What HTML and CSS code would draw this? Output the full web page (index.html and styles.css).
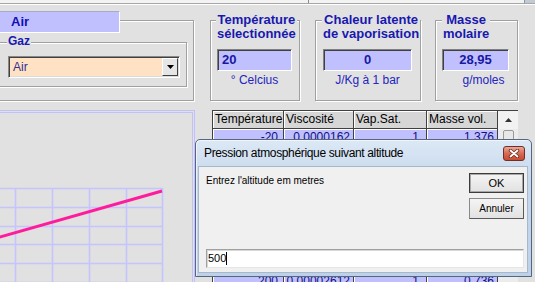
FILE: index.html
```html
<!DOCTYPE html>
<html lang="fr">
<head>
<meta charset="utf-8">
<title>Pression atmosphérique</title>
<link rel="stylesheet" href="styles.css">
</head>
<body>
<div class="topbar"><span class="tick"></span><span class="topbar-end"></span></div>
<div class="main">
  <div class="left-top">
    <div class="group outer">
      <div class="airbox">Air</div>
      <div class="group gaz">
        <div class="legend gazlegend">Gaz</div>
        <div class="combo">
          <span class="combo-text">Air</span>
          <span class="combo-btn"><svg width="7" height="4" viewBox="0 0 7 4"><path d="M0 0H7L3.5 4Z" fill="#000"/></svg></span>
        </div>
      </div>
    </div>
  </div>
  <div class="right-top">
    <div class="group box temp">
      <div class="legend">Température<br>sélectionnée</div>
      <div class="valbox left">20</div>
      <div class="unit">° Celcius</div>
    </div>
    <div class="group box chal">
      <div class="legend">Chaleur latente<br>de vaporisation</div>
      <div class="valbox">0</div>
      <div class="unit">J/Kg à 1 bar</div>
    </div>
    <div class="group box masse">
      <div class="legend">Masse<br>molaire</div>
      <div class="valbox">28,95</div>
      <div class="unit shift">g/moles</div>
    </div>
  </div>
  <div class="chart">
    <svg class="plot" width="199" height="174" viewBox="-7 113 199 174">
      <g stroke="#c4c4ff" stroke-width="1.6" fill="none">
        <path d="M15.5 188V290M52.5 188V290M89.5 188V290M126.5 188V290M162.5 188V290"/>
        <path d="M-7 188.5H163M-7 207.5H163M-7 226.5H163M-7 244.5H163M-7 263.5H163M-7 282.5H163"/>
      </g>
      <path d="M-7 239L162 191" stroke="#ff1c9c" stroke-width="3" fill="none"/>
    </svg>
  </div>
  <div class="table-wrap">
    <div class="cells">
      <div class="hcell">Température</div><div class="hcell">Viscosité</div><div class="hcell">Vap.Sat.</div><div class="hcell">Masse vol.</div>
      <div class="dcell p5">-20</div><div class="dcell">0,0000162</div><div class="dcell p7">1</div><div class="dcell">1,376</div>
      <div class="dcell p5">0</div><div class="dcell">0,0000172</div><div class="dcell p7">1</div><div class="dcell">1,293</div>
      <div class="dcell p5">20</div><div class="dcell">0,0000181</div><div class="dcell p7">1</div><div class="dcell">1,205</div>
      <div class="dcell p5">40</div><div class="dcell">0,0000191</div><div class="dcell p7">1</div><div class="dcell">1,128</div>
      <div class="dcell p5">60</div><div class="dcell">0,0000200</div><div class="dcell p7">1</div><div class="dcell">1,060</div>
      <div class="dcell p5">80</div><div class="dcell">0,0000209</div><div class="dcell p7">1</div><div class="dcell">1,000</div>
      <div class="dcell p5">100</div><div class="dcell">0,0000218</div><div class="dcell p7">1</div><div class="dcell">0,946</div>
      <div class="dcell p5">150</div><div class="dcell">0,0000240</div><div class="dcell p7">1</div><div class="dcell">0,835</div>
      <div class="dcell p5">200</div><div class="dcell">0,00002612</div><div class="dcell p7">1</div><div class="dcell">0,736</div>
    </div>
    <div class="scroll">
      <div class="sb-up"><svg width="7" height="4" viewBox="0 0 7 4"><path d="M0 4H7L3.5 0Z" fill="#333"/></svg></div>
      <div class="sb-thumb"></div>
    </div>
  </div>
</div>

<div class="dialog">
  <div class="dtitle">
    <span class="dtitle-text">Pression atmosphérique suivant altitude</span>
    <span class="dclose"><svg width="12" height="9" viewBox="0 0 12 9"><path d="M2.5 1.5L9.5 7.5M9.5 1.5L2.5 7.5" stroke="#6a2a1c" stroke-width="3.4" stroke-linecap="round"/><path d="M2.5 1.5L9.5 7.5M9.5 1.5L2.5 7.5" stroke="#fff" stroke-width="1.8" stroke-linecap="round"/></svg></span>
  </div>
  <div class="dclient">
    <div class="dtop">
      <div class="dlabel">Entrez l'altitude em metres</div>
      <div class="dbuttons">
        <div class="btn default">OK</div>
        <div class="btn">Annuler</div>
      </div>
    </div>
    <div class="dinput">500<span class="caret"></span></div>
  </div>
</div>
</body>
</html>
```

FILE: styles.css
```css
body {
  margin: 0;
  width: 535px;
  height: 282px;
  overflow: hidden;
  position: relative;
  background: #e1e1e1;
  font-family: "Liberation Sans", Arial, sans-serif;
}

.topbar {
  height: 3px;
  background: #f3f3f3;
  border-bottom: 1px solid #a6a6a6;
  box-shadow: 0 1px 0 #fff;
  display: flex;
}
.tick {
  width: 1px;
  margin-left: 308px;
  background: #8a8a8a;
}
.topbar-end {
  margin-left: auto;
  width: 10px;
  background: #c2cad4;
  border-left: 1px solid #8a96a4;
}

.main {
  display: grid;
  grid-template-columns: 195px 340px;
  grid-template-rows: 106px 172px;
  height: 278px;
  overflow: hidden;
}

.group {
  box-sizing: border-box;
  border: 1px solid #a0a0a0;
  box-shadow: 1px 1px 0 #fff, inset 1px 1px 0 #fff;
}

.outer {
  margin-top: 16px;
  margin-left: -10px;
  width: 204px;
  height: 81px;
}
.airbox {
  margin-top: -10px;
  margin-left: 9px;
  width: 120px;
  height: 22px;
  box-sizing: border-box;
  background: #c0c0ff;
  border-top: 1px solid #a9a9c9;
  border-right: 1px solid #fff;
  border-bottom: 1px solid #fff;
  padding-left: 11px;
  font-weight: bold;
  font-size: 13px;
  line-height: 20px;
  color: #1010b0;
}
.gaz {
  margin-top: 9px;
  width: 196px;
  height: 45px;
}
.legend {
  width: fit-content;
  white-space: nowrap;
  background: #e1e1e1;
  font-weight: bold;
  font-size: 13px;
  line-height: 14px;
  color: #1818b0;
  text-align: center;
  padding: 0 1px;
}
.gazlegend {
  margin-top: -9px;
  margin-left: 15px;
  font-size: 12px;
}
.combo {
  margin-top: 8px;
  margin-left: 16px;
  width: 172px;
  height: 22px;
  box-sizing: border-box;
  background: #ffe1c4;
  border: 1px solid;
  border-color: #888 #fff #fff #888;
  box-shadow: inset 1px 1px 0 #404040, inset -1px -1px 0 #dcdcdc;
  display: flex;
  align-items: center;
}
.combo-text {
  padding-left: 4px;
  font-size: 12px;
  color: #303090;
}
.combo-btn {
  margin-left: auto;
  margin-right: 1px;
  width: 16px;
  height: 18px;
  box-sizing: border-box;
  background: #e6e6e6;
  border: 1px solid;
  border-color: #fff #404040 #404040 #fff;
  display: flex;
  align-items: center;
  justify-content: center;
}

.right-top {
  display: flex;
  padding-top: 16px;
}
.box {
  height: 81px;
}
.temp { margin-left: 15px; width: 90px; }
.chal { margin-left: 15px; width: 106px; }
.masse { margin-left: 14px; width: 83px; }
.box .legend {
  margin-top: -8px;
  margin-left: 5px;
}
.chal .legend { margin-left: 6px; }
.masse .legend { margin-left: 6px; }

.valbox {
  margin-top: 8px;
  margin-left: 6px;
  height: 22px;
  box-sizing: border-box;
  background: #c0c0ff;
  border: 1px solid;
  border-color: #808080 #fff #fff #808080;
  box-shadow: inset 1px 1px 0 #404040;
  font-weight: bold;
  font-size: 13px;
  line-height: 20px;
  color: #1818a0;
  text-align: center;
}
.valbox.left { text-align: left; padding-left: 4px; }
.temp .valbox { width: 75px; }
.chal .valbox { width: 89px; margin-left: 7px; }
.masse .valbox { width: 67px; }
.unit {
  margin-top: 1px;
  margin-left: 6px;
  font-size: 12px;
  line-height: 16px;
  color: #2424c0;
  text-align: center;
  white-space: nowrap;
}
.temp .unit { width: 75px; }
.chal .unit { width: 89px; margin-left: 7px; }
.masse .unit { width: 67px; }
.unit.shift { padding-left: 16px; box-sizing: border-box; }

.chart {
  margin-left: -10px;
  width: 205px;
  height: 180px;
  box-sizing: border-box;
  border: 3px double #c0c0ff;
}
.plot { display: block; }

.table-wrap {
  margin-left: 17px;
  width: 306px;
  height: 190px;
  box-sizing: border-box;
  display: flex;
  border-left: 1px solid #404040;
  border-top: 1px solid #404040;
}
.cells {
  display: grid;
  grid-template-columns: 71px 70px 73px 71px;
  grid-auto-rows: 18px;
  align-content: start;
}
.hcell, .dcell {
  box-sizing: border-box;
  border-right: 1px solid #404040;
  border-bottom: 1px solid #404040;
  font-size: 12px;
  line-height: 17px;
  white-space: nowrap;
  overflow: hidden;
}
.hcell {
  background: #d6d6d6;
  box-shadow: inset 1px 1px 0 #fff;
  padding-left: 2px;
  color: #000;
}
.dcell {
  background: #c0c0ff;
  box-shadow: inset 1px 1px 0 #fff;
  text-align: right;
  padding-right: 3px;
  color: #101080;
}
.dcell.p5 { padding-right: 5px; }
.dcell.p7 { padding-right: 7px; }

.scroll {
  width: 20px;
  background: #ececec;
  display: flex;
  flex-direction: column;
  align-items: center;
}
.sb-up {
  align-self: stretch;
  height: 18px;
  background: #f2f2f2;
  display: flex;
  align-items: center;
  justify-content: center;
}
.sb-thumb {
  width: 11px;
  height: 40px;
  margin-top: 1px;
  box-sizing: border-box;
  border: 1px solid #9a9a9a;
  border-radius: 2px;
  background: #e8e8e8;
}

.dialog {
  position: absolute;
  left: 195px;
  top: 139px;
  width: 337px;
  height: 138px;
  box-sizing: border-box;
  border: 1px solid #56667c;
  border-radius: 5px 5px 0 0;
  background: linear-gradient(#dce8f5, #c6d8ec 30%, #bdd1e9);
  box-shadow: inset 1px 1px 0 rgba(255,255,255,.6);
  padding: 0 3px 3px 2px;
  display: flex;
  flex-direction: column;
}
.dtitle {
  height: 26px;
  display: flex;
  align-items: center;
  padding-left: 6px;
}
.dtitle-text {
  font-size: 12px;
  letter-spacing: -0.35px;
  color: #000;
}
.dclose {
  margin-left: auto;
  margin-right: 3px;
  width: 22px;
  height: 15px;
  box-sizing: border-box;
  border: 1px solid #6e3026;
  border-radius: 3px;
  background: linear-gradient(#eaa99a, #d76a54 50%, #c94a30);
  display: flex;
  align-items: center;
  justify-content: center;
}
.dclient {
  flex: 1;
  background: #f0f0f0;
  border: 1px solid #a6b8cc;
  padding: 6px 3px 4px 7px;
  display: flex;
  flex-direction: column;
}
.dtop {
  display: flex;
}
.dlabel {
  flex: 1;
  padding-top: 1px;
  font-size: 10px;
  line-height: 13px;
  color: #000;
}
.dbuttons {
  width: 55px;
  display: flex;
  flex-direction: column;
  gap: 5px;
}
.btn {
  height: 21px;
  box-sizing: border-box;
  border: 1px solid #8a8a8a;
  border-right-color: #5a5a5a;
  border-bottom-color: #5a5a5a;
  background: linear-gradient(#f4f4f4, #e2e2e2);
  font-size: 10px;
  line-height: 19px;
  text-align: center;
  color: #000;
}
.btn.default {
  height: 20px;
  border-color: #3c3c3c;
  box-shadow: inset 0 0 0 1px #a8a8a8;
  font-size: 11px;
  line-height: 18px;
}
.dinput {
  margin-top: auto;
  height: 19px;
  box-sizing: border-box;
  background: #fff;
  border: 1px solid;
  border-color: #a0a0a0 #e6e6e6 #e6e6e6 #a0a0a0;
  box-shadow: inset 1px 1px 0 #d8d8d8;
  padding-left: 1px;
  font-size: 11px;
  line-height: 17px;
  color: #000;
  display: flex;
  align-items: center;
}
.caret {
  width: 1px;
  height: 13px;
  background: #000;
}
```
